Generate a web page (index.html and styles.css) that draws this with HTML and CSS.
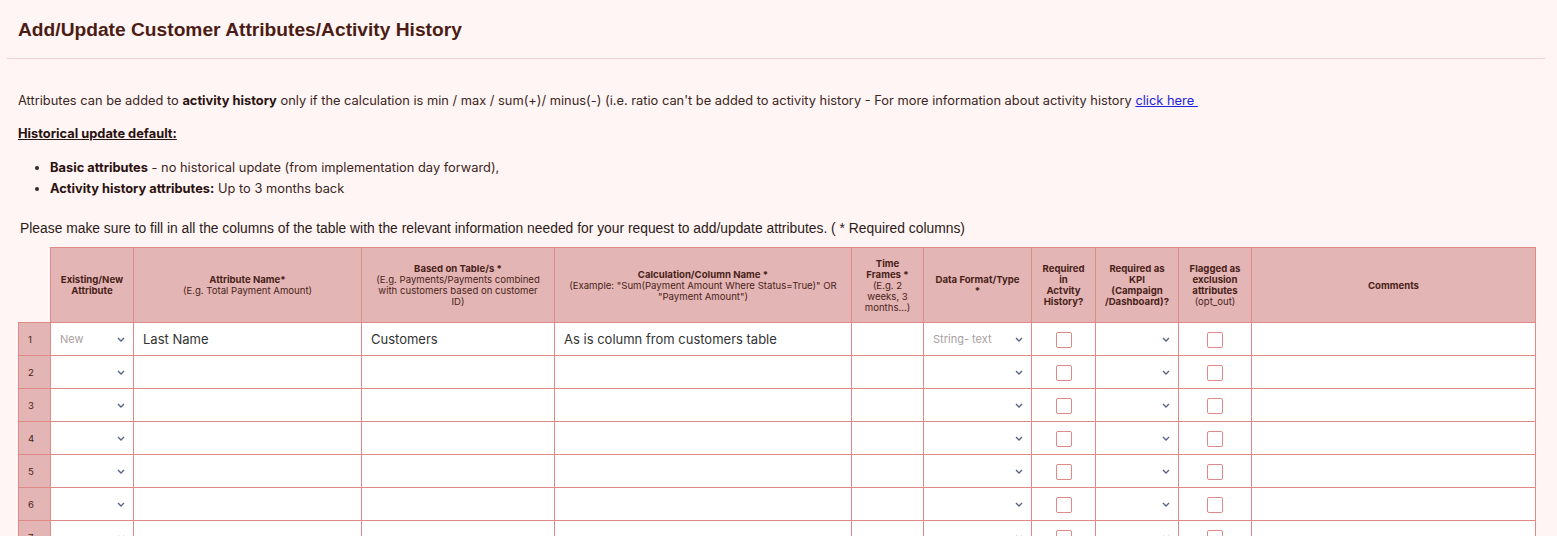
FILE: index.html
```html
<!DOCTYPE html>
<html lang="en">
<head>
  <meta charset="UTF-8">
  <title>Add/Update Customer Attributes</title>
  <link rel="stylesheet" href="styles.css">
</head>
<body>
  <div class="page">
    <h1 class="title">Add/Update Customer Attributes/Activity History</h1>
    <hr class="divider">

    <p class="intro">Attributes can be added to <b>activity history</b> only if the calculation is min / max / sum(+)/ minus(-) (i.e. ratio can't be added to activity history - For more information about activity history <a href="#">click here&nbsp;</a></p>

    <p class="subhead">Historical update default:</p>
    <ul class="defaults">
      <li><b>Basic attributes</b> - no historical update (from implementation day forward),</li>
      <li><b>Activity history attributes:</b> Up to 3 months back</li>
    </ul>

    <p class="note">Please make sure to fill in all the columns of the table with the relevant information needed for your request to add/update attributes. ( * Required columns)</p>

    <table class="attrs">
      <colgroup>
        <col style="width:32px">
        <col style="width:83px">
        <col style="width:228px">
        <col style="width:193px">
        <col style="width:297px">
        <col style="width:72px">
        <col style="width:108px">
        <col style="width:64px">
        <col style="width:83px">
        <col style="width:73px">
        <col style="width:284px">
      </colgroup>
      <thead>
        <tr>
          <th class="blank"></th>
          <th class="first">Existing/New<br>Attribute</th>
          <th>Attribute Name*<br><span>(E.g. Total Payment Amount)</span></th>
          <th>Based on Table/s *<br><span>(E.g. Payments/Payments combined<br>with customers based on customer<br>ID)</span></th>
          <th>Calculation/Column Name *<br><span>(Example: "Sum(Payment Amount Where Status=True)" OR<br>"Payment Amount")</span></th>
          <th>Time<br>Frames *<br><span>(E.g. 2<br>weeks, 3<br>months...)</span></th>
          <th>Data Format/Type<br>*</th>
          <th>Required<br>in<br>Actvity<br>History?</th>
          <th>Required as<br>KPI<br>(Campaign<br>/Dashboard)?</th>
          <th>Flagged as<br>exclusion<br>attributes<br><span>(opt_out)</span></th>
          <th class="last">Comments</th>
        </tr>
      </thead>
      <tbody id="rows"></tbody>
    </table>
  </div>

  <script>
    const firstRow = {
      type: 'New',
      name: 'Last Name',
      table: 'Customers',
      calc: 'As is column from customers table',
      format: 'String- text'
    };

    const chevron = '<svg class="chev" width="8" height="5" viewBox="0 0 8 5"><path d="M1 1l3 3 3-3" fill="none" stroke="#5b6385" stroke-width="1.4"/></svg>';

    function pick(text) {
      return '<div class="pick"><span>' + (text || '') + '</span>' + chevron + '</div>';
    }

    const body = document.getElementById('rows');
    for (let i = 1; i <= 7; i++) {
      const r = i === 1 ? firstRow : {};
      const tr = document.createElement('tr');
      tr.innerHTML =
        '<td class="num">' + i + '</td>' +
        '<td>' + pick(r.type) + '</td>' +
        '<td class="txt">' + (r.name || '') + '</td>' +
        '<td class="txt">' + (r.table || '') + '</td>' +
        '<td class="txt">' + (r.calc || '') + '</td>' +
        '<td></td>' +
        '<td>' + pick(r.format) + '</td>' +
        '<td class="center"><span class="box"></span></td>' +
        '<td>' + pick() + '</td>' +
        '<td class="center"><span class="box"></span></td>' +
        '<td></td>';
      body.appendChild(tr);
    }
  </script>
</body>
</html>
```
FILE: styles.css
```css
body {
  margin: 0;
  background: #fff5f4;
  font-family: 'Inter', 'Liberation Sans', sans-serif;
  color: #3b2522;
}

.page {
  padding: 0 7px;
}

.title {
  margin: 0;
  padding: 19px 11px 0;
  height: 40px;
  font-family: 'Liberation Sans', Arial, sans-serif;
  font-size: 19.2px;
  font-weight: bold;
  color: #4b1c14;
  box-sizing: border-box;
}

.divider {
  margin: 18px 5px 0 0;
  border: none;
  border-top: 1px solid #f0d3d3;
}

.intro {
  margin: 34px 0 0 11px;
  font-size: 12.85px;
  line-height: 16px;
}

.intro b {
  font-weight: 700;
  color: #2a1210;
}

.intro a {
  color: #2222dd;
}

.subhead {
  margin: 17px 0 0 11px;
  font-size: 12.85px;
  line-height: 16px;
  font-weight: 700;
  text-decoration: underline;
  color: #2a1210;
}

.defaults {
  margin: 15px 0 0;
  padding-left: 43px;
  font-size: 12.85px;
  line-height: 21px;
}

.defaults b {
  color: #2a1210;
}

.note {
  margin: 21px 0 0 13px;
  font-family: 'Liberation Sans', Arial, sans-serif;
  font-size: 13.85px;
  line-height: 16px;
  color: #2c1a18;
}

.attrs {
  margin: 11px 0 0 11px;
  border-collapse: collapse;
  table-layout: fixed;
  width: 1518px;
}

.attrs th {
  background: #e3b5b4;
  border: 1px solid #e08a88;
  height: 74px;
  padding: 0 2px;
  font-size: 9.6px;
  line-height: 11px;
  font-weight: 700;
  color: #4a1f1a;
  vertical-align: middle;
}

.attrs th span {
  font-weight: 400;
}

.attrs th.blank {
  background: transparent;
  border: none;
  border-bottom: 1px solid #e08a88;
}

.attrs td {
  background: #fff;
  border: 1px solid #e08a88;
  height: 32px;
  padding: 0;
  font-size: 13px;
  color: #333;
}

.attrs td.num {
  background: #e3b5b4;
  font-size: 9.6px;
  color: #4a1f1a;
  padding-left: 9px;
}

.attrs td.txt {
  padding-left: 9px;
}

.attrs td.center {
  text-align: center;
}

.pick {
  display: flex;
  align-items: center;
  justify-content: space-between;
  padding: 0 8px 0 9px;
  font-size: 11px;
  color: #aaa09f;
}

.chev {
  display: block;
}

.box {
  display: inline-block;
  width: 14px;
  height: 14px;
  border: 1px solid #e08a88;
  border-radius: 2px;
  background: #fff;
  vertical-align: middle;
}
```
